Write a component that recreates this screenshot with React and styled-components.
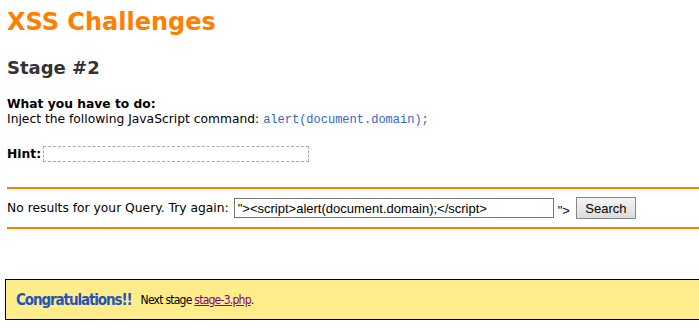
import styled, { createGlobalStyle } from "styled-components";

const Global = createGlobalStyle`
  body {
    margin: 0;
    padding: 0 0 0 7px;
    font-family: "DejaVu Sans", Verdana, sans-serif;
    font-size: 12.3px;
    color: #000;
    background: #fff;
    overflow: hidden;
  }
`;

const Page = styled.div`
  padding-top: 6px;
`;

const Title = styled.h1`
  margin: 0;
  font-size: 24px;
  line-height: 32px;
  color: #ff7f00;
  font-weight: bold;
`;

const Stage = styled.h2`
  margin: 18px 0 0;
  font-size: 18px;
  line-height: 24px;
  color: #333;
`;

const Task = styled.div`
  margin-top: 17px;
  line-height: 15px;
`;

const Strong = styled.div`
  font-weight: bold;
`;

const Code = styled.code`
  font-family: "Liberation Mono", "Courier New", monospace;
  font-size: 12px;
  color: #3366cc;
`;

const HintRow = styled.div`
  margin-top: 18px;
  display: flex;
  align-items: center;
  gap: 2px;
  font-weight: bold;
`;

const HintBox = styled.span`
  display: inline-block;
  width: 264px;
  height: 14px;
  border: 1px dashed #aaa;
`;

const Rule = styled.hr`
  margin: 0;
  border: none;
  height: 2px;
  background: #ff7f00;
`;

const QueryBlock = styled.div`
  margin-top: 25px;
`;

const QueryRow = styled.form`
  display: flex;
  align-items: center;
  padding: 8px 0 8px;
  margin: 0;
`;

const Input = styled.input`
  margin: 0 0 0 5px;
  width: 312px;
  height: 16px;
  padding: 1px 3px;
  border: 1px solid #777;
  font-family: "Liberation Sans", Arial, sans-serif;
  font-size: 13px;
  color: #000;
  outline: none;
`;

const Tail = styled.span`
  margin-left: 4px;
  font-family: "Liberation Sans", Arial, sans-serif;
  font-size: 13px;
  position: relative;
  top: 2px;
`;

const Button = styled.button`
  margin-left: 6px;
  width: 60px;
  height: 22px;
  padding: 0;
  border: 1px solid #888;
  background: linear-gradient(#f4f4f4, #dcdcdc);
  font-family: "Liberation Sans", Arial, sans-serif;
  font-size: 13px;
  color: #000;
`;

const Congrats = styled.div`
  margin: 50px 0 0 -2px;
  height: 39px;
  display: flex;
  align-items: center;
  gap: 9px;
  padding-left: 10px;
  background: #ffec8b;
  border: 1px solid #000;
  border-right: none;
  font-family: "DejaVu Sans Condensed", sans-serif;
`;

const Big = styled.span`
  font-weight: bold;
  font-size: 15px;
  letter-spacing: -1.1px;
  color: #2255bb;
`;

const Next = styled.span`
  font-size: 12px;
  letter-spacing: -0.75px;
  a {
    color: #800080;
  }
`;

export default function App() {
  return (
    <Page>
      <Global />
      <Title>XSS Challenges</Title>
      <Stage>Stage #2</Stage>
      <Task>
        <Strong>What you have to do:</Strong>
        Inject the following JavaScript command: <Code>alert(document.domain);</Code>
      </Task>
      <HintRow>
        Hint: <HintBox />
      </HintRow>
      <QueryBlock>
        <Rule />
        <QueryRow onSubmit={(e) => e.preventDefault()}>
          No results for your Query. Try again:
          <Input defaultValue={'"><script>alert(document.domain);</script>'} />
          <Tail>"&gt;</Tail>
          <Button type="submit">Search</Button>
        </QueryRow>
        <Rule />
      </QueryBlock>
      <Congrats>
        <Big>Congratulations!!</Big>
        <Next>
          Next stage <a href="#">stage-3.php</a>.
        </Next>
      </Congrats>
    </Page>
  );
}
